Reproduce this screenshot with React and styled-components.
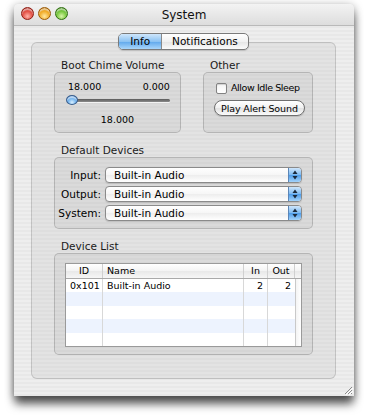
import { Fragment } from "react";
import styled, { createGlobalStyle } from "styled-components";

const GlobalStyle = createGlobalStyle`
  html, body {
    margin: 0;
    padding: 0;
    background: #ffffff;
  }
  body {
    font-family: "DejaVu Sans", "Liberation Sans", sans-serif;
    color: #000;
  }
`;

const stripes = `repeating-linear-gradient(
  to bottom,
  #eeeeee 0px,
  #eeeeee 2px,
  #e8e8e8 2px,
  #e8e8e8 4px
)`;

const Page = styled.div`
  min-height: 415px;
  padding: 4px 0 20px 14px;
  box-sizing: border-box;
`;

const Window = styled.div`
  position: relative;
  width: 340px;
  border-radius: 5px 5px 0 0;
  box-shadow: 0 9px 10px -1px rgba(0, 0, 0, 0.6), 0 2px 10px rgba(0, 0, 0, 0.4);
  background: ${stripes};
  overflow: hidden;
`;

const TitleBar = styled.div`
  position: relative;
  height: 21px;
  display: flex;
  align-items: center;
  justify-content: center;
  background: linear-gradient(#f3f3f3, #dddddd);
  border-bottom: 1px solid #b9b9b9;
  font-size: 12px;
  color: #111;
`;

const Lights = styled.div`
  position: absolute;
  left: 7px;
  top: 3px;
  display: flex;
  gap: 4px;
`;

const lightColors = {
  red: ["#ffb3a8", "#e0463b", "#8f1c12"],
  yellow: ["#ffe7a0", "#f0a61c", "#9a5a06"],
  green: ["#d8f5a8", "#6cc232", "#2f6e0f"],
};

const Light = styled.span`
  width: 13px;
  height: 13px;
  border-radius: 50%;
  box-sizing: border-box;
  border: 1px solid ${(p) => lightColors[p.$c][2]};
  background: radial-gradient(
    circle at 50% 75%,
    ${(p) => lightColors[p.$c][0]} 0%,
    ${(p) => lightColors[p.$c][1]} 55%,
    ${(p) => lightColors[p.$c][2]} 100%
  );
  box-shadow: inset 0 2px 1px rgba(255, 255, 255, 0.55);
`;

const Content = styled.div`
  padding: 7px 18px 17px 17px;
  display: flex;
  flex-direction: column;
  align-items: center;
`;

const Tabs = styled.div`
  position: relative;
  z-index: 1;
  display: flex;
  height: 17px;
  box-sizing: border-box;
  border: 1px solid #7a7a7a;
  border-radius: 5px;
  overflow: hidden;
  background: linear-gradient(#ffffff, #f1f1f1 50%, #e4e4e4 51%, #fbfbfb);
  box-shadow: 0 1px 1px rgba(0, 0, 0, 0.15);
`;

const Tab = styled.div`
  display: flex;
  align-items: center;
  padding: 0 ${(p) => (p.$active ? "11px" : "10px")};
  font-size: 10.5px;
  line-height: 15px;
  border-left: ${(p) => (p.$first ? "none" : "1px solid #8a8a8a")};
  background: ${(p) =>
    p.$active
      ? "linear-gradient(#cfe6fb, #8cc3f3 50%, #5ea7ec 51%, #a9d6fb)"
      : "transparent"};
`;

const Panel = styled.div`
  align-self: stretch;
  margin-top: -8px;
  padding: 15px 22px 23px;
  border: 1px solid rgba(0, 0, 0, 0.14);
  border-radius: 6px;
  background: rgba(0, 0, 0, 0.045);
  display: flex;
  flex-direction: column;
  gap: 10px;
`;

const TopRow = styled.div`
  display: flex;
  gap: 22px;
`;

const Group = styled.div`
  display: flex;
  flex-direction: column;
  width: ${(p) => p.$w || "auto"};
`;

const GroupTitle = styled.div`
  font-size: 10.5px;
  line-height: 14px;
  height: 14px;
  padding-left: 7px;
  color: #1a1a1a;
`;

const Box = styled.div`
  box-sizing: border-box;
  height: ${(p) => p.$h}px;
  border: 1px solid rgba(0, 0, 0, 0.17);
  border-radius: 5px;
  background: rgba(0, 0, 0, 0.04);
  padding: ${(p) => p.$pad};
  display: flex;
  flex-direction: column;
`;

const Small = styled.span`
  font-size: 9.5px;
  line-height: 12px;
  letter-spacing: -0.4px;
  white-space: nowrap;
`;

const NumRow = styled.div`
  display: flex;
  justify-content: space-between;
  font-size: 9.5px;
  line-height: 12px;
`;

const Track = styled.div`
  position: relative;
  height: 10px;
  margin: 2px 0 0 -1px;
  display: flex;
  align-items: center;
  &::before {
    content: "";
    flex: 1;
    height: 3px;
    border-radius: 2px;
    background: linear-gradient(#5a5a5a, #8c8c8c);
    box-shadow: 0 1px 0 rgba(255, 255, 255, 0.7);
  }
`;

const Knob = styled.span`
  position: absolute;
  left: -1px;
  top: 0;
  width: 12px;
  height: 10px;
  box-sizing: border-box;
  border-radius: 50%;
  border: 1px solid #3a5f8e;
  background: radial-gradient(
    circle at 50% 80%,
    #d8efff 0%,
    #6fb2ee 50%,
    #2f6fc0 100%
  );
  box-shadow: inset 0 2px 1px rgba(255, 255, 255, 0.6);
`;

const CenterNum = styled.div`
  text-align: center;
  font-size: 9.5px;
  line-height: 12px;
  margin: 9px 0 0 -3px;
`;

const CheckRow = styled.label`
  display: flex;
  align-items: center;
  gap: 4px;
`;

const Check = styled.span`
  flex: none;
  width: 11px;
  height: 11px;
  box-sizing: border-box;
  border: 1px solid #828282;
  border-radius: 2px;
  background: linear-gradient(#f4f4f4, #ffffff);
  box-shadow: inset 0 1px 1px rgba(0, 0, 0, 0.15);
`;

const PillButton = styled.button`
  margin: 6px 0 0 -2px;
  height: 16px;
  width: 91px;
  padding: 0;
  border: 1px solid #6e6e6e;
  border-radius: 8px;
  background: linear-gradient(#ffffff, #f0f0f0 50%, #e2e2e2 51%, #fafafa);
  font-family: inherit;
  font-size: 9.5px;
  letter-spacing: -0.1px;
  color: #000;
  box-shadow: 0 1px 1px rgba(0, 0, 0, 0.15);
`;

const DeviceGrid = styled.div`
  display: grid;
  grid-template-columns: 46px 197px;
  grid-auto-rows: 16px;
  column-gap: 4px;
  row-gap: 3px;
  align-items: center;
`;

const FieldLabel = styled.span`
  text-align: right;
  font-size: 10.5px;
`;

const Popup = styled.div`
  position: relative;
  height: 16px;
  box-sizing: border-box;
  border: 1px solid #8a8a8a;
  border-radius: 4px;
  background: linear-gradient(#ffffff, #f6f6f6 50%, #ededed 51%, #ffffff);
  box-shadow: 0 1px 1px rgba(0, 0, 0, 0.12);
  display: flex;
  align-items: center;
  padding-left: 8px;
  font-size: 10.5px;
  overflow: hidden;
`;

const PopupArrows = styled.span`
  position: absolute;
  right: 0;
  top: 0;
  bottom: 0;
  width: 12px;
  border-left: 1px solid #5b86b8;
  background: linear-gradient(#cfe6fb, #7ab8f1 50%, #4d9be8 51%, #a3d3fb);
  display: flex;
  align-items: center;
  justify-content: center;
`;

const Table = styled.div`
  border: 1px solid #9a9a9a;
  background: #fff;
  display: flex;
  flex-direction: column;
  font-size: 9.5px;
`;

const cols = "37px 141px 24px 27px 1fr";

const HeaderRow = styled.div`
  display: grid;
  grid-template-columns: ${cols};
  height: 15px;
  box-sizing: border-box;
  border-bottom: 1px solid #a9a9a9;
  background: linear-gradient(#ffffff, #f3f3f3 50%, #e8e8e8 51%, #f6f6f6);
`;

const HeadCell = styled.div`
  line-height: 14px;
  padding: 0 4px;
  text-align: ${(p) => p.$align || "left"};
  border-right: ${(p) => (p.$last ? "none" : "1px solid #d0d0d0")};
`;

const Body = styled.div`
  display: flex;
`;

const Rows = styled.div`
  flex: 0 0 229px;
  display: flex;
  flex-direction: column;
`;

const Row = styled.div`
  display: grid;
  grid-template-columns: 37px 141px 24px 27px;
  height: 13.4px;
  background: ${(p) => (p.$alt ? "#edf3fe" : "#ffffff")};
`;

const Cell = styled.div`
  line-height: 13px;
  padding: 0 4px;
  text-align: ${(p) => p.$align || "left"};
  border-right: ${(p) => (p.$last ? "none" : "1px solid #d8d8d8")};
  white-space: nowrap;
`;

const Scroller = styled.div`
  flex: 1;
  border-left: 1px solid #c9c9c9;
  background: linear-gradient(to right, #f4f4f4, #ffffff);
`;

const Grip = styled.svg`
  position: absolute;
  right: 1px;
  bottom: 1px;
`;

function ArrowsIcon() {
  return (
    <svg width="6" height="10" viewBox="0 0 6 10">
      <path d="M3 0.5 L5.5 4 L0.5 4 Z" fill="#1b2a3c" />
      <path d="M3 9.5 L5.5 6 L0.5 6 Z" fill="#1b2a3c" />
    </svg>
  );
}

const devices = ["Input:", "Output:", "System:"];

export default function App() {
  const rows = [
    { id: "0x101", name: "Built-in Audio", inp: "2", out: "2" },
    null,
    null,
    null,
    null,
  ];

  return (
    <Page>
      <GlobalStyle />
      <Window>
        <TitleBar>
          <Lights>
            <Light $c="red" />
            <Light $c="yellow" />
            <Light $c="green" />
          </Lights>
          System
        </TitleBar>
        <Content>
          <Tabs>
            <Tab $active $first>
              Info
            </Tab>
            <Tab>Notifications</Tab>
          </Tabs>
          <Panel>
            <TopRow>
              <Group $w="128px">
                <GroupTitle>Boot Chime Volume</GroupTitle>
                <Box $h={61} $pad="8px 10px 0 13px">
                  <NumRow>
                    <span>18.000</span>
                    <span>0.000</span>
                  </NumRow>
                  <Track>
                    <Knob />
                  </Track>
                  <CenterNum>18.000</CenterNum>
                </Box>
              </Group>
              <Group $w="111px">
                <GroupTitle>Other</GroupTitle>
                <Box $h={61} $pad="9px 4px 0 12px">
                  <CheckRow>
                    <Check />
                    <Small>Allow Idle Sleep</Small>
                  </CheckRow>
                  <PillButton>Play Alert Sound</PillButton>
                </Box>
              </Group>
            </TopRow>

            <Group>
              <GroupTitle>Default Devices</GroupTitle>
              <Box $h={72} $pad="9px 0 0 0">
                <DeviceGrid>
                  {devices.map((d) => (
                    <Fragment key={d}>
                      <FieldLabel>{d}</FieldLabel>
                      <Popup>
                        Built-in Audio
                        <PopupArrows>
                          <ArrowsIcon />
                        </PopupArrows>
                      </Popup>
                    </Fragment>
                  ))}
                </DeviceGrid>
              </Box>
            </Group>

            <Group>
              <GroupTitle>Device List</GroupTitle>
              <Box $h={102} $pad="9px 10px 0 10px">
                <Table>
                  <HeaderRow>
                    <HeadCell $align="center">ID</HeadCell>
                    <HeadCell>Name</HeadCell>
                    <HeadCell $align="center">In</HeadCell>
                    <HeadCell $align="center">Out</HeadCell>
                    <HeadCell $last />
                  </HeaderRow>
                  <Body>
                    <Rows>
                      {rows.map((r, i) => (
                        <Row key={i} $alt={i % 2 === 1}>
                          <Cell>{r ? r.id : ""}</Cell>
                          <Cell>{r ? r.name : ""}</Cell>
                          <Cell $align="right">{r ? r.inp : ""}</Cell>
                          <Cell $align="right" $last>
                            {r ? r.out : ""}
                          </Cell>
                        </Row>
                      ))}
                    </Rows>
                    <Scroller />
                  </Body>
                </Table>
              </Box>
            </Group>
          </Panel>
        </Content>
        <Grip width="10" height="10" viewBox="0 0 10 10">
          <path d="M9 2 L2 9 M9 5 L5 9 M9 8 L8 9" stroke="#8a8a8a" strokeWidth="1" />
          <path d="M10 3 L3 10 M10 6 L6 10" stroke="#ffffff" strokeWidth="1" />
        </Grip>
      </Window>
    </Page>
  );
}
